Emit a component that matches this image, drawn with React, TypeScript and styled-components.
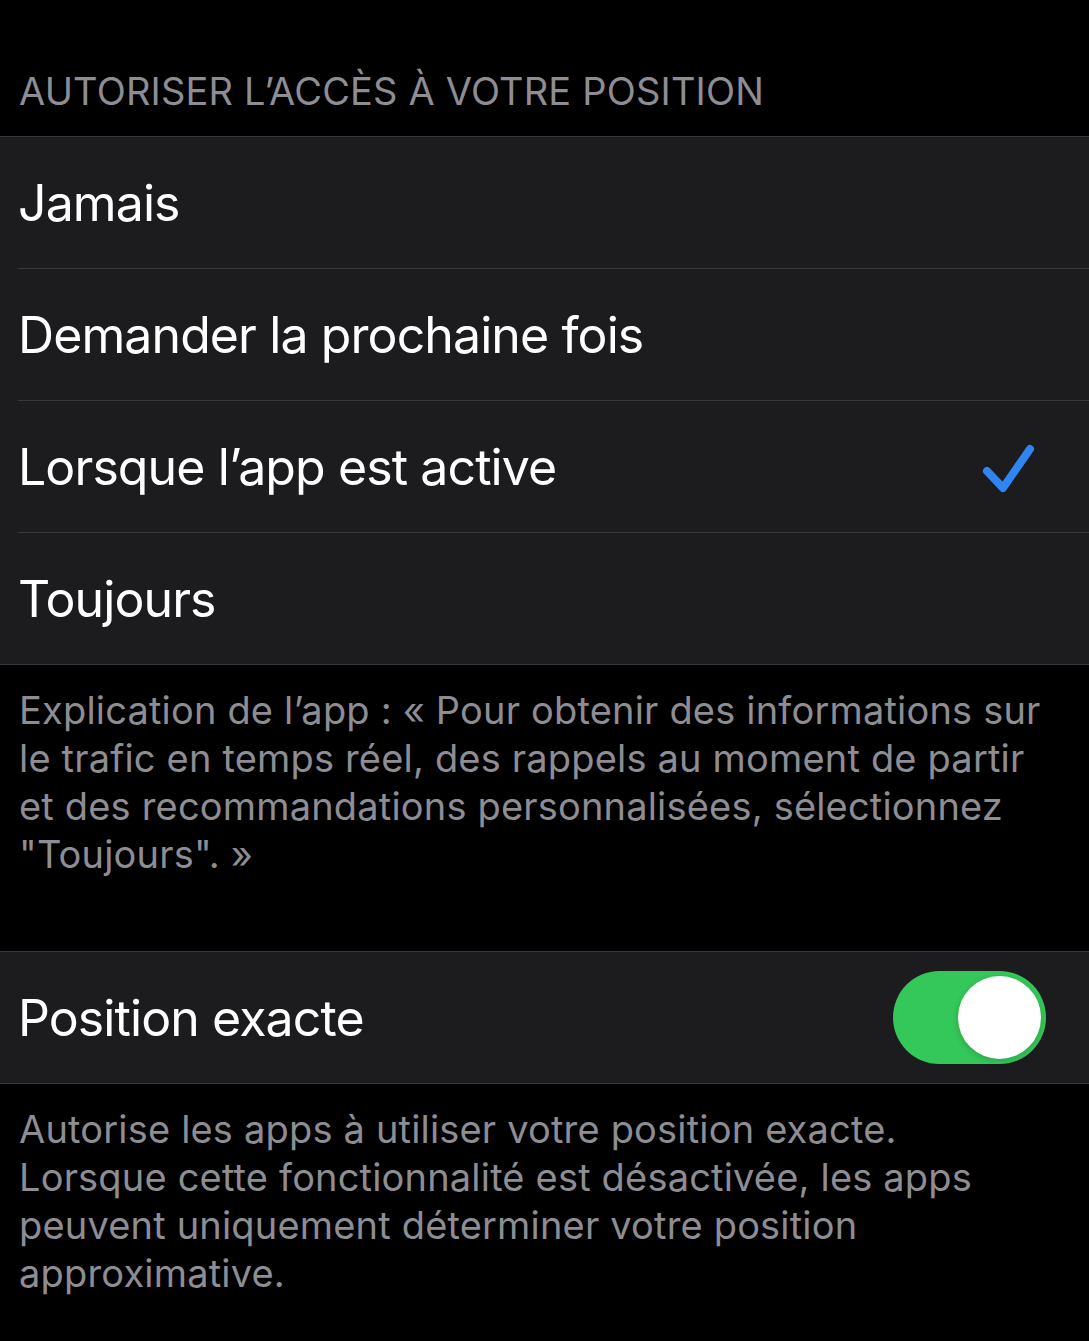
import React from "react";
import styled, { createGlobalStyle } from "styled-components";

const Global = createGlobalStyle`
  html, body { margin: 0; padding: 0; background: #000; }
  body { font-family: Inter, "Noto Sans", "Liberation Sans", sans-serif; -webkit-font-smoothing: antialiased; }
`;

const Page = styled.div`
  width: 1089px;
  min-height: 1341px;
  background: #000;
  overflow: hidden;
`;

const SectionHeader = styled.div`
  height: 136px;
  box-sizing: border-box;
  padding: 68px 18px 0 19px;
  color: #8d8d93;
  font-size: 38px;
  line-height: 46px;
  letter-spacing: 0.18px;
  text-transform: uppercase;
  white-space: nowrap;
`;

const Group = styled.div`
  background: #1c1c1e;
  border-top: 1px solid #38383a;
  border-bottom: 1px solid #38383a;
`;

const Row = styled.div<{ $last?: boolean }>`
  height: 131px;
  margin-left: 18px;
  padding-right: 43px;
  display: flex;
  align-items: center;
  justify-content: space-between;
  border-bottom: ${(p) => (p.$last ? "none" : "1px solid #38383a")};
`;

const Label = styled.span`
  color: #fff;
  font-size: 50px;
  letter-spacing: -0.9px;
  white-space: nowrap;
`;

const Footer = styled.div`
  padding: 21px 18px 0 19px;
  color: #8d8d93;
  font-size: 38px;
  line-height: 48px;
  letter-spacing: 0.18px;
  white-space: nowrap;
`;

const Spacer = styled.div<{ $h: number }>`
  height: ${(p) => p.$h}px;
`;

const Check = styled.svg`
  width: 56px;
  height: 56px;
  margin-right: 11px;
`;

const Toggle = styled.div`
  width: 153px;
  height: 93px;
  border-radius: 47px;
  background: #34c759;
  display: flex;
  align-items: center;
  justify-content: flex-end;
  padding: 0 5px;
  box-sizing: border-box;
`;

const Knob = styled.div`
  width: 83px;
  height: 83px;
  border-radius: 50%;
  background: #fff;
  box-shadow: 0 2px 6px rgba(0, 0, 0, 0.18);
`;

const options = ["Jamais", "Demander la prochaine fois", "Lorsque l’app est active", "Toujours"];
const selected = 2;

export default function App() {
  return (
    <Page>
      <Global />
      <SectionHeader>Autoriser l’accès à votre position</SectionHeader>
      <Group>
        {options.map((o, i) => (
          <Row key={o} $last={i === options.length - 1}>
            <Label>{o}</Label>
            {i === selected && (
              <Check viewBox="0 0 56 56" fill="none">
                <path d="M8 32 L24 49 L51 10" stroke="#2f86f2" strokeWidth="8" strokeLinecap="round" strokeLinejoin="round" />
              </Check>
            )}
          </Row>
        ))}
      </Group>
      <Footer>
        Explication de l’app : « Pour obtenir des informations sur
        <br />
        le trafic en temps réel, des rappels au moment de partir
        <br />
        et des recommandations personnalisées, sélectionnez
        <br />
        "Toujours". »
      </Footer>
      <Spacer $h={73} />
      <Group>
        <Row $last>
          <Label>Position exacte</Label>
          <Toggle>
            <Knob />
          </Toggle>
        </Row>
      </Group>
      <Footer>
        Autorise les apps à utiliser votre position exacte.
        <br />
        Lorsque cette fonctionnalité est désactivée, les apps
        <br />
        peuvent uniquement déterminer votre position
        <br />
        approximative.
      </Footer>
    </Page>
  );
}
